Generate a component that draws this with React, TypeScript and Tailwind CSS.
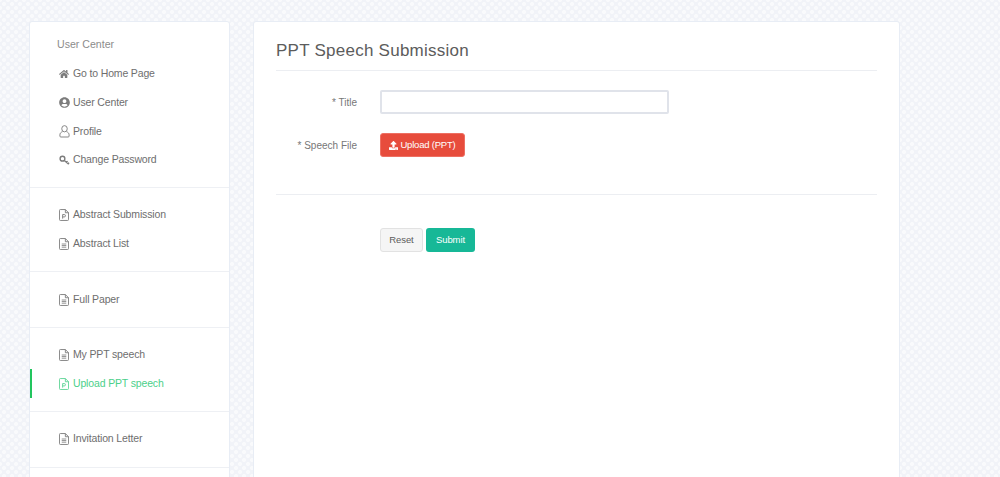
import React from 'react';
import { FaHome, FaUserCircle, FaUpload } from 'react-icons/fa';

function UserIcon() {
    return (
        <svg viewBox="0 0 12 14" className="w-[11px] h-[13px]" fill="none" stroke="currentColor" strokeWidth="1">
            <ellipse cx="6" cy="4" rx="3" ry="3.4" />
            <path d="M3.8 7.2C2 7.8 1 9 1 10.6V12a1 1 0 0 0 1 1h8a1 1 0 0 0 1-1v-1.4c0-1.6-1-2.8-2.8-3.4" />
        </svg>
    );
}

function KeyIcon() {
    return (
        <svg viewBox="0 0 12 12" className="w-[11px] h-[11px]" fill="none" stroke="currentColor">
            <circle cx="3.8" cy="4" r="2.6" strokeWidth="1.5" />
            <path d="M5.8 6l4.8 4M8 8l1.4-1.2M9.8 9.6l1.2-1.2" strokeWidth="1.4" />
        </svg>
    );
}

function FileIcon({ letter }: { letter?: boolean }) {
    return (
        <svg viewBox="0 0 11 13" className="w-[10px] h-[12px]" fill="none" stroke="currentColor" strokeWidth="1">
            <path d="M1.5.5H7L10.5 4v7.5a1 1 0 0 1-1 1h-8a1 1 0 0 1-1-1v-10a1 1 0 0 1 1-1zM7 .5V4h3.5" />
            {letter ? (
                <path d="M4 10.5V6h1.8a1.2 1.2 0 0 1 0 2.6H4" />
            ) : (
                <path d="M3 6.5h5M3 8.2h5M3 10h5" strokeWidth="0.9" />
            )}
        </svg>
    );
}

function NavItem({ icon, label, active }: { icon: React.ReactNode; label: string; active?: boolean }) {
    return (
        <div className={`h-[28.6px] flex items-center pl-[25px] border-l-2 text-[10.5px] tracking-[-0.15px] ${active ? 'border-[#22c55e] text-[#4bd08a]' : 'border-transparent text-[#6e6e6e]'}`}>
            <span className="w-[14px] flex justify-center mr-[1px] opacity-90">{icon}</span>
            <span className="ml-[1px]">{label}</span>
        </div>
    );
}

function NavGroup({ children }: { children: React.ReactNode }) {
    return <div className="border-t border-[#eef0f4] py-[13px]">{children}</div>;
}

export default function App() {
    return (
        <div className="h-[477px] overflow-hidden bg-[#f1f3f8] bg-[radial-gradient(circle,#f9fafc_1.6px,transparent_2.4px),radial-gradient(circle,#f9fafc_1.6px,transparent_2.4px)] bg-size-[8px_8px] bg-position-[0_0,4px_4px] font-['Liberation_Sans',sans-serif]">
            <div className="flex items-start gap-[23px] pl-[29px] pt-[21px]">
                {/* Sidebar */}
                <aside className="w-[201px] h-[500px] shrink-0 bg-white border border-[#e8edf5] rounded-[3px]">
                    <div className="pt-[14px] pb-[12.7px]">
                        <div className="pl-[27px] h-[18px] flex items-center text-[10.6px] text-[#8c8c8c] mb-[6px]">User Center</div>
                        <NavItem icon={<FaHome className="w-[10px] h-[10px]" />} label="Go to Home Page" />
                        <NavItem icon={<FaUserCircle className="w-[11px] h-[11px]" />} label="User Center" />
                        <NavItem icon={<UserIcon />} label="Profile" />
                        <NavItem icon={<KeyIcon />} label="Change Password" />
                    </div>
                    <NavGroup>
                        <NavItem icon={<FileIcon letter />} label="Abstract Submission" />
                        <NavItem icon={<FileIcon />} label="Abstract List" />
                    </NavGroup>
                    <NavGroup>
                        <NavItem icon={<FileIcon />} label="Full Paper" />
                    </NavGroup>
                    <NavGroup>
                        <NavItem icon={<FileIcon />} label="My PPT speech" />
                        <NavItem icon={<FileIcon letter />} label="Upload PPT speech" active />
                    </NavGroup>
                    <NavGroup>
                        <NavItem icon={<FileIcon />} label="Invitation Letter" />
                    </NavGroup>
                    <NavGroup>
                        <div className="h-[28px]" />
                    </NavGroup>
                </aside>

                {/* Main */}
                <main className="w-[647px] h-[500px] shrink-0 bg-white border border-[#e8edf5] rounded-[3px] px-[22px]">
                    <h1 className="h-[49px] flex items-center pt-[9px] text-[17px] tracking-[0.25px] text-[#5c5c5c] border-b border-[#eceef2]">PPT Speech Submission</h1>
                    <div className="flex items-center mt-[19px]">
                        <label className="w-[81px] text-right text-[10px] text-[#777777]">* Title</label>
                        <input className="ml-[23px] w-[289px] h-[24px] border-2 border-[#e0e3ea] rounded-[2px] bg-white" />
                    </div>
                    <div className="flex items-center mt-[19px]">
                        <label className="w-[81px] text-right text-[10px] text-[#777777]">* Speech File</label>
                        <button className="ml-[23px] h-[24px] w-[85px] flex items-center justify-center gap-[2px] bg-[#e74c3c] border border-[#ee6f62] text-white text-[9.5px] tracking-[-0.2px] rounded-[3px]">
                            <FaUpload className="w-[9px] h-[9px]" />
                            Upload (PPT)
                        </button>
                    </div>
                    <div className="border-t border-[#eceef2] mt-[37px]" />
                    <div className="flex gap-[3px] mt-[33px] ml-[104px]">
                        <button className="w-[43px] h-[24px] bg-[#f5f5f5] border border-[#e2e2e2] rounded-[3px] text-[9.5px] tracking-[-0.1px] text-[#5c5c5c]">Reset</button>
                        <button className="w-[49px] h-[24px] bg-[#17b897] rounded-[3px] text-[9.5px] tracking-[-0.1px] text-white">Submit</button>
                    </div>
                </main>
            </div>
        </div>
    );
}
